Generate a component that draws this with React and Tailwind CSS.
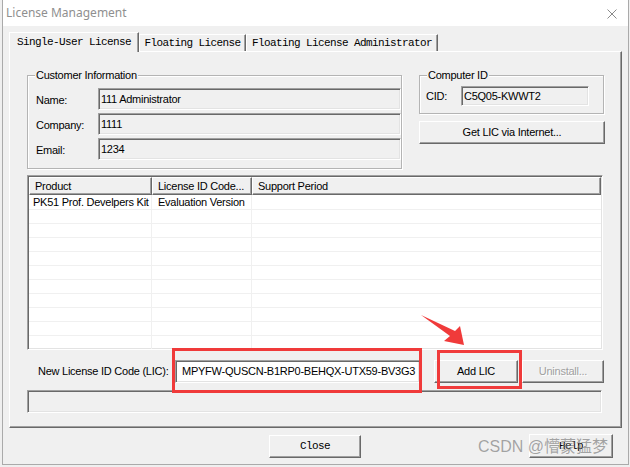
import React from 'react';

// classic win32 3d edges
const sunken =
  'border border-[#a0a0a0] border-r-white border-b-white shadow-[inset_1px_1px_0_#696969,inset_-1px_-1px_0_#e3e3e3]';
const raised =
  'border border-white border-r-[#696969] border-b-[#696969] shadow-[inset_-1px_-1px_0_#a0a0a0]';
const mono = "font-['Liberation_Mono','Courier_New',monospace] text-[11px] tracking-[-0.6px]";

const customer = [
  ['Name:', '111 Administrator'],
  ['Company:', '1111'],
  ['Email:', '1234'],
];

const rows = [
  ['PK51 Prof. Develpers Kit', 'Evaluation Version', ''],
  ...Array.from({ length: 10 }, () => ['', '', '']),
];

function GroupBox({ title, className, children }) {
  return (
    <div
      className={`relative border border-[#b4b4b4] shadow-[inset_1px_1px_0_#fff,1px_1px_0_#fff] ${className}`}
    >
      <span className="absolute left-[7px] top-[-8px] bg-[#f0f0f0] px-[1px] leading-[14px]">{title}</span>
      {children}
    </div>
  );
}

function Button({ children, className, disabled }) {
  return (
    <div
      className={`${raised} bg-[#f0f0f0] flex items-center justify-center ${
        disabled ? 'text-[#a0a0a0] [text-shadow:1px_1px_0_#fff]' : 'text-black'
      } ${className}`}
    >
      {children}
    </div>
  );
}

export default function App() {
  return (
    <div className="relative w-[630px] h-[467px] overflow-hidden bg-[#efefef] pl-[2px] font-['Liberation_Sans',Arial,sans-serif] text-[11px] tracking-[-0.25px] text-black">
      <div className="w-[627px] h-[465px] bg-[#f0f0f0] border-x border-b border-[#aaaaaa] flex flex-col">
        {/* title bar */}
        <div className="h-[26px] shrink-0 bg-white flex items-center justify-between pl-[3px] pr-[11px]">
          <span className="font-['Noto_Sans',sans-serif] text-[12px] tracking-normal text-[#8f8f8f]">
            License Management
          </span>
          <svg width="10" height="10" viewBox="0 0 10 10" className="mt-[1px]">
            <path d="M0.5 0.5L9.5 9.5M9.5 0.5L0.5 9.5" stroke="#8a8a8a" strokeWidth="1" />
          </svg>
        </div>

        {/* tabs */}
        <div className={`mt-[6px] h-[19px] pl-[6px] flex items-end ${mono}`}>
          <div className="relative z-10 w-[130px] h-[20px] -mb-px bg-[#f0f0f0] border-t border-l border-white border-r border-r-[#696969] shadow-[inset_-1px_0_0_#a0a0a0] flex items-center justify-center">
            Single-User License
          </div>
          <div className="w-[107px] h-[17px] border-t border-l border-white border-r border-r-[#696969] shadow-[inset_-1px_0_0_#a0a0a0] flex items-center justify-center">
            Floating License
          </div>
          <div className="w-[192px] h-[17px] border-t border-l border-white border-r border-r-[#696969] shadow-[inset_-1px_0_0_#a0a0a0] flex items-center justify-center">
            Floating License Administrator
          </div>
        </div>

        {/* tab panel */}
        <div className="ml-[6px] w-[613px] h-[377px] border border-white border-r-[#696969] border-b-[#696969] shadow-[inset_-1px_-1px_0_#a0a0a0] pt-[23px] pl-[17px]">
          <div className="flex gap-[17px]">
            <GroupBox title="Customer Information" className="w-[375px] h-[94px] pt-[12px] pl-[8px] flex flex-col gap-[3px]">
              {customer.map(([label, value]) => (
                <div key={label} className="flex items-center h-[22px]">
                  <span className="w-[62px] mt-[2px]">{label}</span>
                  <div className={`${sunken} w-[303px] h-[22px] bg-[#f0f0f0] pl-[2px] leading-[20px]`}>{value}</div>
                </div>
              ))}
            </GroupBox>

            <div className="w-[185px] flex flex-col">
              <GroupBox title="Computer ID" className="h-[39px] pt-[10px] pl-[6px]">
                <div className="flex items-center h-[20px]">
                  <span className="w-[35px]">CID:</span>
                  <div className={`${sunken} w-[128px] h-[20px] bg-[#f0f0f0] pl-[2px] leading-[18px]`}>C5Q05-KWWT2</div>
                </div>
              </GroupBox>
              <Button className="mt-[7px] w-[186px] h-[23px]">Get LIC via Internet...</Button>
            </div>
          </div>

          {/* license list */}
          <div className={`${sunken} mt-[6px] w-[576px] h-[175px] bg-white p-px overflow-hidden`}>
            <div className="flex h-[18px] leading-[16px]">
              <div className={`${raised} bg-[#f0f0f0] w-[123px] pl-[5px]`}>Product</div>
              <div className={`${raised} bg-[#f0f0f0] w-[100px] pl-[5px]`}>License ID Code...</div>
              <div className={`${raised} bg-[#f0f0f0] w-[349px] pl-[5px]`}>Support Period</div>
            </div>
            {rows.map((r, i) => (
              <div
                key={i}
                className={`flex border-b border-[#f0f0f0] ${i === 0 ? 'h-[15px] leading-[14px]' : 'h-[14px] leading-[13px]'}`}
              >
                <div className="w-[123px] pl-[4px] border-r border-[#f0f0f0] whitespace-nowrap">{r[0]}</div>
                <div className="w-[100px] pl-[6px] border-r border-[#f0f0f0] whitespace-nowrap">{r[1]}</div>
                <div className="flex-1">{r[2]}</div>
              </div>
            ))}
          </div>

          {/* new licence row */}
          <div className="mt-[10px] h-[23px] flex items-center">
            <span className="ml-[11px] w-[137px]">New License ID Code (LIC):</span>
            <div className={`${sunken} w-[245px] h-[23px] bg-white pl-[6px] leading-[21px] whitespace-nowrap`}>
              MPYFW-QUSCN-B1RP0-BEHQX-UTX59-BV3G3
            </div>
            <Button className="ml-[14px] w-[84px] h-[23px]">Add LIC</Button>
            <Button disabled className="ml-[4px] w-[82px] h-[23px]">Uninstall...</Button>
          </div>

          {/* status bar */}
          <div className={`${sunken} mt-[7px] w-[575px] h-[23px] bg-[#f0f0f0]`} />
        </div>

        {/* footer */}
        <div className={`mt-[7px] flex ${mono}`}>
          <Button className="ml-[266px] w-[92px] h-[23px]">Close</Button>
          <Button className="ml-[168px] -mt-px w-[84px] h-[24px]">Help</Button>
        </div>
      </div>

      {/* annotations */}
      <div className="absolute left-[172px] top-[348px] w-[250px] h-[45px] border-[3px] border-[#f03a3a]" />
      <div className="absolute left-[437px] top-[350px] w-[85px] h-[39px] border-[3px] border-[#f03a3a]" />
      <svg className="absolute left-[415px] top-[310px]" width="55" height="40" viewBox="0 0 55 40">
        <polygon points="6,5 40,21 45,16 49,35 29,31 35,26" fill="#f03a3a" />
      </svg>
      <div className="absolute left-[478px] top-[437px] leading-[20px] text-[16px] tracking-normal font-['Liberation_Sans','Noto_Sans_CJK_SC',sans-serif] text-[#7a7a7aa8] whitespace-nowrap">
        CSDN @懵蒙猛梦
      </div>
    </div>
  );
}
